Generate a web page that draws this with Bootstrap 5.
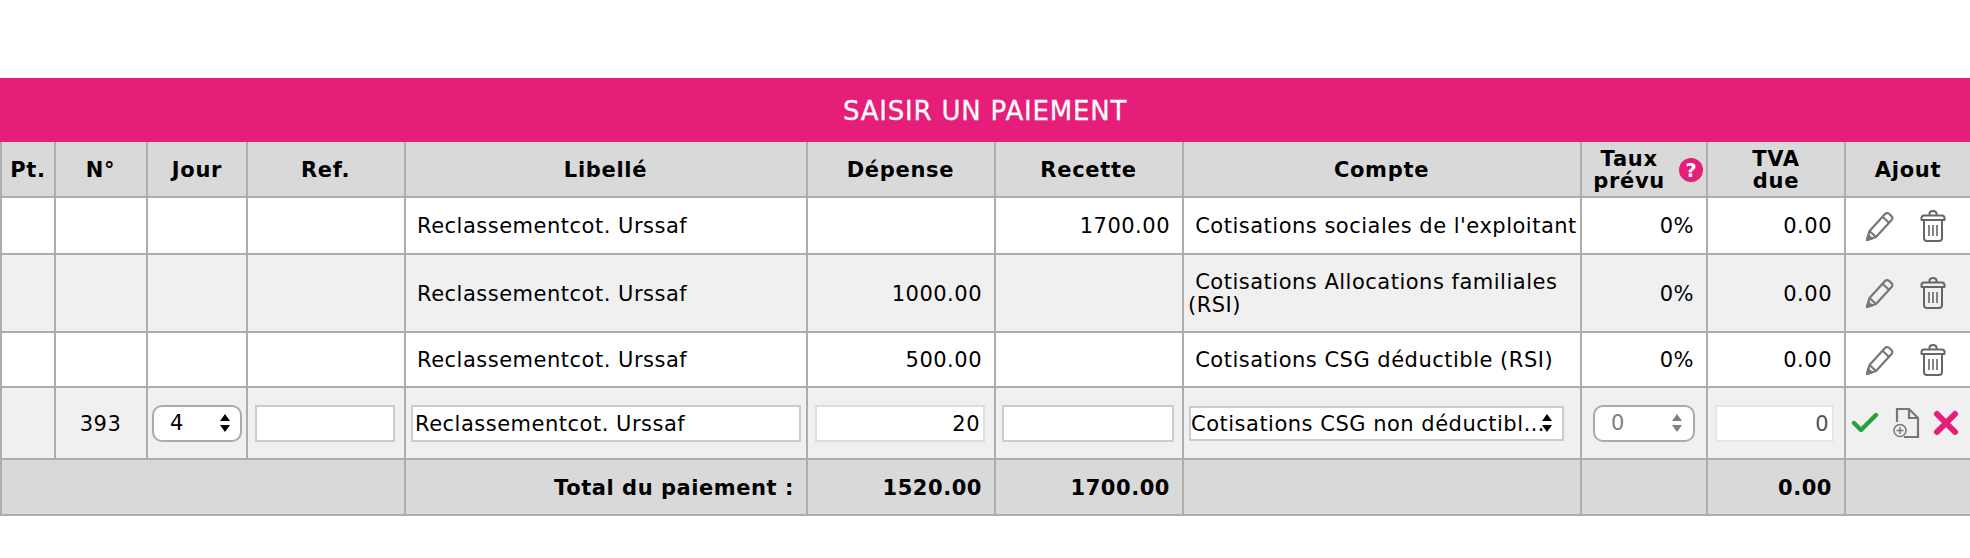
<!DOCTYPE html>
<html lang="fr">
<head>
  <meta charset="UTF-8">
  <title>Saisir un paiement</title>
  <link href="https://cdn.jsdelivr.net/npm/bootstrap@5.3.0/dist/css/bootstrap.min.css" rel="stylesheet">
  <style>
    body {
      background: #fff;
      font-family: "DejaVu Sans", Verdana, sans-serif;
      font-size: 21px;
      letter-spacing: .5px;
      color: #000;
      padding-top: 78px;
    }
    .pay-title {
      background: #e71d7a;
      color: #fff;
      height: 64px;
      font-size: 26px;
      letter-spacing: .8px;
      padding-top: 2px;
      -webkit-text-stroke: .3px #fff;
    }
    .pay-table {
      table-layout: fixed;
      width: 100%;
      margin: 0;
      border-collapse: collapse;
      --bs-table-bg: transparent;
      --bs-table-color: #000;
    }
    .pay-table.table > * > * > * {
      border: 2px solid #adadad;
      padding: 2px 12px 0 11px;
      vertical-align: middle;
      line-height: 1.08;
      box-shadow: none;
    }
    .pay-table.table > thead > tr > th { border-top: 0; }
    .pay-table th { background: #d9d9d9; text-align: center; font-weight: 700; letter-spacing: .7px; }
    .pay-table.table > thead > tr > th.tight { padding: 2px 3px 0; line-height: 1.05; }
    .pay-table .row-white td { background: #fff; }
    .pay-table .row-grey td { background: #f0f0f0; }
    .pay-table .row-total th { background: #d9d9d9; letter-spacing: .55px; }
    .pay-table .row-total th.text-num { text-align: right; }
    .pay-table.table > * > * > td.compte { padding: 2px 1px 0 4px; }
    .pay-table.table > * > * > td.in-jour { padding: 0 4px; }
    .pay-table.table > * > * > td.in-ref { padding: 0 9px 0 7px; }
    .pay-table.table > * > * > td.in-lib { padding: 0 5px; }
    .pay-table.table > * > * > td.in-amt { padding: 0 9px 0 7px; }
    .pay-table.table > * > * > td.in-rec { padding: 0 8px 0 6px; }
    .pay-table.table > * > * > td.in-cpt { padding: 0 16px 0 5px; }
    .pay-table.table > * > * > td.in-taux { padding: 0 11px; }
    .pay-table.table > * > * > td.in-tva { padding: 0 10px 0 7px; }
    .pay-table.table > * > * > td.in-act { padding: 0 0 0 5px; }
    .pay-table.table > * > * > td.in-ico { padding: 0 16px 0 11px; }
    .h-head { height: 55px; }
    .h-r1 { height: 57px; }
    .h-r2 { height: 78px; }
    .h-r3 { height: 55px; }
    .h-r4 { height: 72px; }
    .h-total { height: 56px; }
    .c-pt { width: 54px; } .c-num { width: 92px; } .c-jour { width: 100px; }
    .c-ref { width: 158px; } .c-lib { width: 402px; } .c-dep { width: 188px; }
    .c-rec { width: 188px; } .c-cpt { width: 398px; } .c-taux { width: 126px; }
    .c-tva { width: 138px; } .c-ajout { width: 126px; }
    .pay-input, .pay-select, .pay-pill {
      display: block;
      width: 100%;
      height: 37px;
      font: inherit;
      letter-spacing: inherit;
      color: #000;
      background-color: #fff;
      outline: 0;
      margin: 0;
    }
    .pay-input { border: 2px solid #ddd; padding: 2px 3px 0 2px; }
    .pay-input.ref-box { border-color: #ccc; }
    .pay-select {
      appearance: none;
      -webkit-appearance: none;
      height: 35px;
      border: 2px solid #ccc;
      border-radius: 0;
      padding: 2px 17px 0 0;
      text-overflow: ellipsis;
      white-space: nowrap;
      overflow: hidden;
      background-repeat: no-repeat;
      background-position: right 9px center;
      background-size: 12px 20px;
      background-image: url("data:image/svg+xml,%3Csvg xmlns='http://www.w3.org/2000/svg' viewBox='0 0 12 20'%3E%3Cpath d='M6 1l5 7H1zM6 19l-5-7h10z' fill='%23000'/%3E%3C/svg%3E");
    }
    .pay-pill {
      appearance: none;
      -webkit-appearance: none;
      border: 2px solid #aaa;
      border-radius: 10px;
      padding: 0 26px 0 16px;
      background-repeat: no-repeat;
      background-position: right 9px center;
      background-size: 12px 20px;
      background-image: url("data:image/svg+xml,%3Csvg xmlns='http://www.w3.org/2000/svg' viewBox='0 0 12 20'%3E%3Cpath d='M6 1l5 7H1zM6 19l-5-7h10z' fill='%23000'/%3E%3C/svg%3E");
    }
    .pay-pill.is-off {
      color: #808080;
      padding-left: 16px;
      background-position: right 9px center;
      background-size: 14px 20px;
      background-image: url("data:image/svg+xml,%3Csvg xmlns='http://www.w3.org/2000/svg' viewBox='0 0 12 20'%3E%3Cpath d='M6 1l5 7H1zM6 19l-5-7h10z' fill='%23808080'/%3E%3C/svg%3E");
    }
    .pay-input.is-off { color: #555; border-color: #e6e6e6; }
    .help-dot {
      display: block;
      flex: none;
      width: 24px;
      height: 24px;
      line-height: 24px;
      border-radius: 50%;
      background: #e71d7a;
      color: #fff;
      font-size: 19px;
      font-weight: 700;
      letter-spacing: 0;
      text-align: center;
    }
    .taux-head { gap: 14px; padding-right: 0; }
    .icon-row { display: flex; align-items: center; justify-content: center; }
    .gap-edit { gap: 25px; }
    .gap-new { gap: 13px; justify-content: flex-start; }
    .text-num { text-align: right; }
  </style>
</head>
<body>
  <div class="pay-title d-flex align-items-center justify-content-center">SAISIR UN PAIEMENT</div>

  <table class="table pay-table">
    <colgroup>
      <col class="c-pt"><col class="c-num"><col class="c-jour"><col class="c-ref"><col class="c-lib"><col class="c-dep">
      <col class="c-rec"><col class="c-cpt"><col class="c-taux"><col class="c-tva"><col class="c-ajout">
    </colgroup>
    <thead>
      <tr class="h-head">
        <th class="tight">Pt.</th>
        <th>N°</th>
        <th class="tight">Jour</th>
        <th>Ref.</th>
        <th>Libellé</th>
        <th>Dépense</th>
        <th>Recette</th>
        <th>Compte</th>
        <th class="tight">
          <div class="d-flex align-items-center justify-content-end taux-head">
            <span>Taux<br>prévu</span>
            <span class="help-dot">?</span>
          </div>
        </th>
        <th class="tight">TVA<br>due</th>
        <th class="tight">Ajout</th>
      </tr>
    </thead>
    <tbody>
      <tr class="row-white h-r1">
        <td></td><td></td><td></td><td></td>
        <td>Reclassementcot. Urssaf</td>
        <td class="text-num"></td>
        <td class="text-num">1700.00</td>
        <td class="compte">&nbsp;Cotisations sociales de l'exploitant</td>
        <td class="text-num">0%</td>
        <td class="text-num">0.00</td>
        <td class="in-ico">
          <div class="icon-row gap-edit">
            <svg width="30" height="32" viewBox="0 0 30 32" fill="none" stroke="#777" stroke-width="2.2" stroke-linejoin="round"><path d="M2 30l2.500-9L20 4a2.800 2.800 0 0 1 4-.2l2.500 2.300a2.800 2.800 0 0 1 .1 4L11 27z"/><path d="M4.500 21l6.500 6M17.500 6.800l6.500 6"/><path d="M2 30l1.300-4.800 3.600 3.300z" fill="#777"/></svg>
            <svg width="26" height="34" viewBox="0 0 26 34" fill="none" stroke="#666" stroke-width="2" stroke-linejoin="round"><path d="M1.500 11V9c0-1.500 1-2.500 2.500-2.500h18c1.500 0 2.500 1 2.500 2.500v2z"/><path d="M9.500 6.500V4.500C9.500 2.500 10.500 2 13 2s3.500.5 3.500 2.500v2"/><path d="M4 11v18c0 2 1 3 3 3h12c2 0 3-1 3-3V11"/><path d="M9 16v11M13 16v11M17 16v11" stroke-width="1.600"/></svg>
          </div>
        </td>
      </tr>
      <tr class="row-grey h-r2">
        <td></td><td></td><td></td><td></td>
        <td>Reclassementcot. Urssaf</td>
        <td class="text-num">1000.00</td>
        <td class="text-num"></td>
        <td class="compte">&nbsp;Cotisations Allocations familiales (RSI)</td>
        <td class="text-num">0%</td>
        <td class="text-num">0.00</td>
        <td class="in-ico">
          <div class="icon-row gap-edit">
            <svg width="30" height="32" viewBox="0 0 30 32" fill="none" stroke="#777" stroke-width="2.2" stroke-linejoin="round"><path d="M2 30l2.500-9L20 4a2.800 2.800 0 0 1 4-.2l2.500 2.300a2.800 2.800 0 0 1 .1 4L11 27z"/><path d="M4.500 21l6.500 6M17.500 6.800l6.500 6"/><path d="M2 30l1.300-4.800 3.600 3.300z" fill="#777"/></svg>
            <svg width="26" height="34" viewBox="0 0 26 34" fill="none" stroke="#666" stroke-width="2" stroke-linejoin="round"><path d="M1.500 11V9c0-1.500 1-2.500 2.500-2.500h18c1.500 0 2.500 1 2.500 2.500v2z"/><path d="M9.500 6.500V4.500C9.500 2.500 10.500 2 13 2s3.500.5 3.500 2.500v2"/><path d="M4 11v18c0 2 1 3 3 3h12c2 0 3-1 3-3V11"/><path d="M9 16v11M13 16v11M17 16v11" stroke-width="1.600"/></svg>
          </div>
        </td>
      </tr>
      <tr class="row-white h-r3">
        <td></td><td></td><td></td><td></td>
        <td>Reclassementcot. Urssaf</td>
        <td class="text-num">500.00</td>
        <td class="text-num"></td>
        <td class="compte">&nbsp;Cotisations CSG déductible (RSI)</td>
        <td class="text-num">0%</td>
        <td class="text-num">0.00</td>
        <td class="in-ico">
          <div class="icon-row gap-edit">
            <svg width="30" height="32" viewBox="0 0 30 32" fill="none" stroke="#777" stroke-width="2.2" stroke-linejoin="round"><path d="M2 30l2.500-9L20 4a2.800 2.800 0 0 1 4-.2l2.500 2.300a2.800 2.800 0 0 1 .1 4L11 27z"/><path d="M4.500 21l6.500 6M17.500 6.800l6.500 6"/><path d="M2 30l1.300-4.800 3.600 3.300z" fill="#777"/></svg>
            <svg width="26" height="34" viewBox="0 0 26 34" fill="none" stroke="#666" stroke-width="2" stroke-linejoin="round"><path d="M1.500 11V9c0-1.500 1-2.500 2.500-2.500h18c1.500 0 2.500 1 2.500 2.500v2z"/><path d="M9.500 6.500V4.500C9.500 2.500 10.500 2 13 2s3.500.5 3.500 2.500v2"/><path d="M4 11v18c0 2 1 3 3 3h12c2 0 3-1 3-3V11"/><path d="M9 16v11M13 16v11M17 16v11" stroke-width="1.600"/></svg>
          </div>
        </td>
      </tr>
      <tr class="row-grey h-r4">
        <td></td>
        <td class="text-center">393</td>
        <td class="in-jour"><select class="pay-pill"><option>4</option></select></td>
        <td class="in-ref"><input class="pay-input ref-box" type="text"></td>
        <td class="in-lib"><input class="pay-input ref-box" type="text" value="Reclassementcot. Urssaf"></td>
        <td class="in-amt"><input class="pay-input text-num" type="text" value="20"></td>
        <td class="in-rec"><input class="pay-input ref-box" type="text"></td>
        <td class="in-cpt"><select class="pay-select"><option>Cotisations CSG non déductible (RSI)</option></select></td>
        <td class="in-taux"><select class="pay-pill is-off" disabled><option>0</option></select></td>
        <td class="in-tva"><input class="pay-input is-off text-num" type="text" value="0"></td>
        <td class="in-act">
          <div class="icon-row gap-new">
            <svg width="28" height="22" viewBox="0 0 28 22" fill="none" stroke="#28a03c" stroke-width="4.400" stroke-linecap="round" stroke-linejoin="round"><path d="M3 11l7 7L25 3"/></svg>
            <svg width="28" height="32" viewBox="0 0 28 32" fill="none" stroke="#777" stroke-width="2.200"><path d="M5 15V2h12l9 9v19H12"/><path d="M17 2v9h9"/><circle cx="8" cy="23.500" r="6" stroke-width="1.500"/><path d="M8 20v7M4.500 23.500h7" stroke-width="1.500"/></svg>
            <svg width="26" height="26" viewBox="0 0 26 26" fill="none" stroke="#e71d7a" stroke-width="6" stroke-linecap="round"><path d="M4 4l18 18M22 4L4 22"/></svg>
          </div>
        </td>
      </tr>
    </tbody>
    <tfoot>
      <tr class="row-total h-total">
        <th colspan="4"></th>
        <th class="text-num">Total du paiement :</th>
        <th class="text-num">1520.00</th>
        <th class="text-num">1700.00</th>
        <th></th>
        <th></th>
        <th class="text-num">0.00</th>
        <th></th>
      </tr>
    </tfoot>
  </table>

  <script src="https://cdn.jsdelivr.net/npm/bootstrap@5.3.0/dist/js/bootstrap.bundle.min.js"></script>
</body>
</html>
